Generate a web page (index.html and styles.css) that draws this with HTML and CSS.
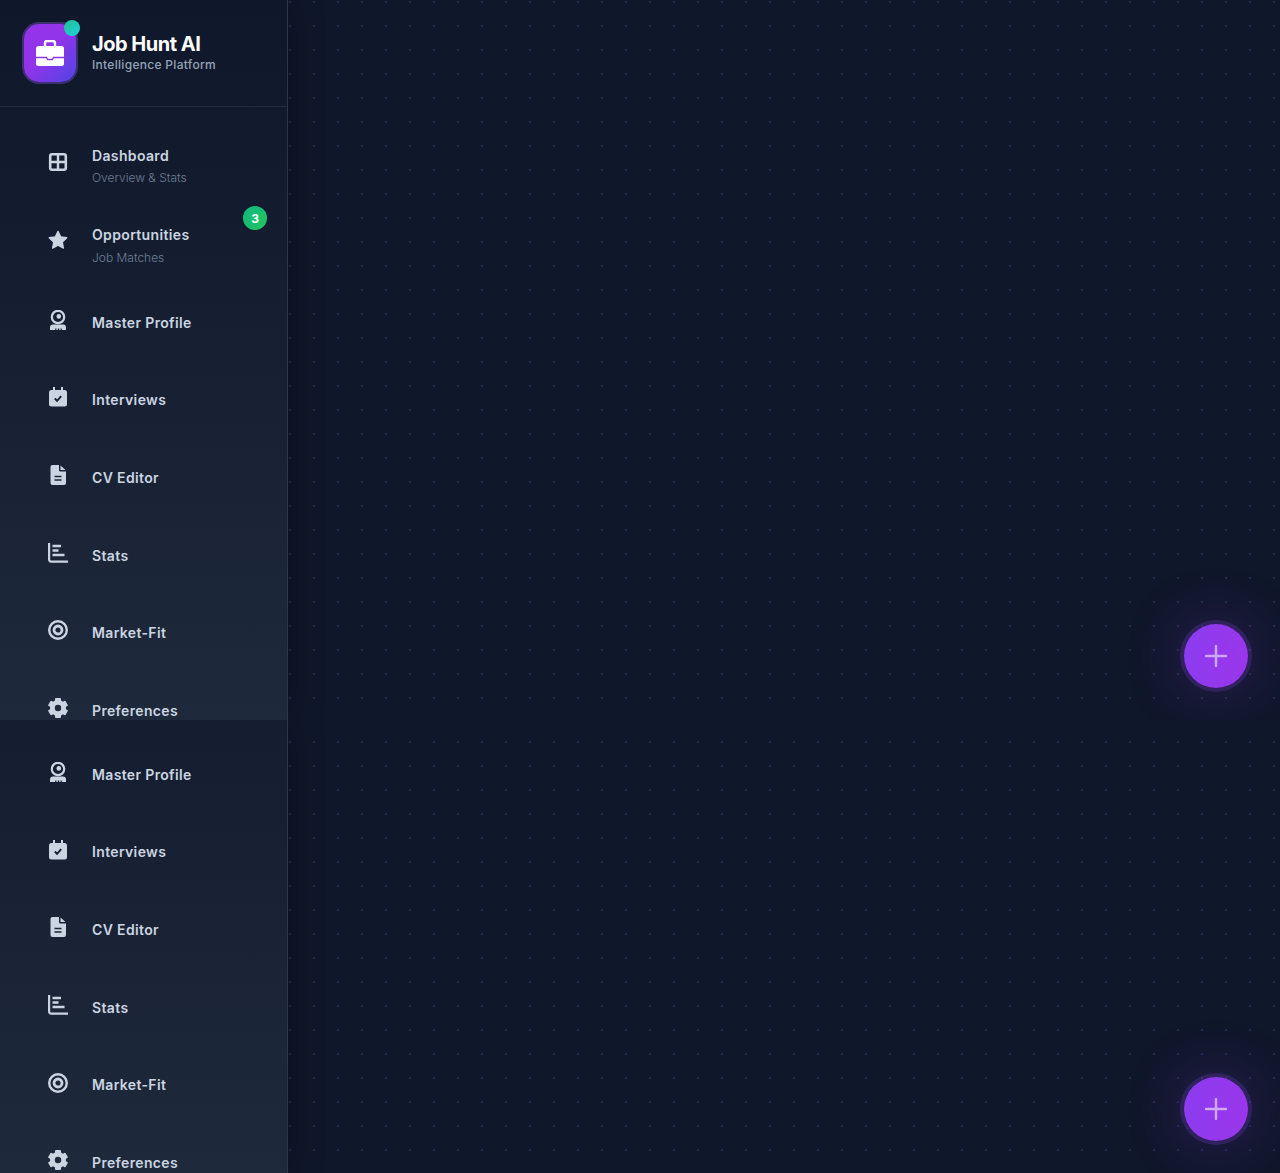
FILE: index.html
```html
<!DOCTYPE html>
<html lang="en">
<head>
  <meta charset="UTF-8">
  <meta name="viewport" content="width=device-width, initial-scale=1">
  <title>Job Hunt AI</title>
  <link rel="stylesheet" href="styles.css">
</head>
<body>
  <!-- Iconos compartidos -->
  <svg class="icon-defs" xmlns="http://www.w3.org/2000/svg">
    <symbol id="i-dashboard" viewBox="0 0 20 20">
      <rect x="2.200" y="2.200" width="15.600" height="15.600" rx="2" fill="none" stroke="currentColor" stroke-width="2.600"/>
      <path d="M10 2v16M2 10h16" fill="none" stroke="currentColor" stroke-width="2.400"/>
    </symbol>
    <symbol id="i-star" viewBox="0 0 20 20">
      <path d="M10 1.300l2.700 5.500 6.100.9-4.400 4.300 1 6.100-5.400-2.900-5.400 2.900 1-6.100-4.400-4.300 6.100-.9z" fill="currentColor" stroke="currentColor" stroke-width="1.200" stroke-linejoin="round"/>
    </symbol>
    <symbol id="i-profile" viewBox="0 0 20 20">
      <circle cx="10" cy="7" r="6.200" fill="none" stroke="currentColor" stroke-width="2.200"/>
      <circle cx="10.800" cy="6.400" r="2.300" fill="currentColor"/>
      <path d="M2 20v-2.500A3 3 0 0 1 5 14.500h10a3 3 0 0 1 3 3V20h-4.200v-1.500h-1.200V20h-1.400v-1.500H9.800V20H8.400v-1.500H7.200V20z" fill="currentColor"/>
    </symbol>
    <symbol id="i-calendar" viewBox="0 0 20 20">
      <path d="M5 0h2v3h6V0h2v3h1.500A2.500 2.500 0 0 1 19 5.500V17a2.500 2.500 0 0 1-2.500 2.500h-13A2.500 2.500 0 0 1 1 17V5.500A2.500 2.500 0 0 1 3.500 3H5z" fill="currentColor"/>
      <path d="M6.800 11.500l2.300 2.300 4.100-4.600" fill="none" stroke="#1a2438" stroke-width="2"/>
    </symbol>
    <symbol id="i-file" viewBox="0 0 20 20">
      <path d="M4.500 0H11v5a1.500 1.500 0 0 0 1.500 1.500H18V18a2 2 0 0 1-2 2H4.500a2 2 0 0 1-2-2V2a2 2 0 0 1 2-2zM12.500 .5L17.500 5h-5z" fill="currentColor"/>
      <path d="M6.500 11.500h7M6.500 15h7" fill="none" stroke="#1b2539" stroke-width="1.500"/>
    </symbol>
    <symbol id="i-chart" viewBox="0 0 20 20">
      <path d="M1.100 0v16.600a2 2 0 0 0 2 2H20" fill="none" stroke="currentColor" stroke-width="2.200"/>
      <path d="M4.500 3h8.500M4.500 7.500h6M4.500 12h12" fill="none" stroke="currentColor" stroke-width="2.400"/>
    </symbol>
    <symbol id="i-target" viewBox="0 0 20 20">
      <circle cx="10" cy="10" r="8.800" fill="none" stroke="currentColor" stroke-width="2.400"/>
      <circle cx="10" cy="10" r="4" fill="none" stroke="currentColor" stroke-width="2.800"/>
    </symbol>
    <symbol id="i-gear" viewBox="0 0 20 20">
      <circle cx="10" cy="10" r="5.600" fill="none" stroke="currentColor" stroke-width="4.800"/>
      <g fill="currentColor">
        <rect x="7" y="0" width="6" height="5" rx="1"/>
        <rect x="7" y="0" width="6" height="5" rx="1" transform="rotate(60 10 10)"/>
        <rect x="7" y="0" width="6" height="5" rx="1" transform="rotate(120 10 10)"/>
        <rect x="7" y="0" width="6" height="5" rx="1" transform="rotate(180 10 10)"/>
        <rect x="7" y="0" width="6" height="5" rx="1" transform="rotate(240 10 10)"/>
        <rect x="7" y="0" width="6" height="5" rx="1" transform="rotate(300 10 10)"/>
      </g>
    </symbol>
    <symbol id="i-plus" viewBox="0 0 22 22">
      <path d="M11 1v20M1 11h20" fill="none" stroke="currentColor" stroke-width="2.400" stroke-linecap="round"/>
    </symbol>
  </svg>

  <!-- Primera vista -->
  <section class="frame frame-top">
    <aside class="sidebar">
      <header class="brand">
        <div class="brand-logo">
          <svg width="28" height="26" viewBox="0 0 28 26">
            <path d="M9 7V3a2 2 0 0 1 2-2h6a2 2 0 0 1 2 2v4" fill="none" stroke="#fff" stroke-width="2.400"/>
            <rect y="6" width="28" height="20" rx="2.500" fill="#fff"/>
            <path d="M0 17.500H10.500L11.500 19.500H16.500L17.500 17.500H28" fill="none" stroke="#8a35e6" stroke-width="1.300"/>
          </svg>
          <span class="brand-dot"></span>
        </div>
        <div class="brand-text">
          <h1 class="brand-title">Job Hunt AI</h1>
          <p class="brand-sub">Intelligence Platform</p>
        </div>
      </header>
      <nav class="nav">
        <a class="nav-item nav-item-double">
          <svg class="nav-icon"><use href="#i-dashboard"/></svg>
          <span class="nav-text"><span class="nav-title">Dashboard</span><span class="nav-sub">Overview &amp; Stats</span></span>
        </a>
        <a class="nav-item nav-item-double nav-item-badged">
          <svg class="nav-icon"><use href="#i-star"/></svg>
          <span class="nav-text"><span class="nav-title">Opportunities</span><span class="nav-sub">Job Matches</span></span>
          <span class="nav-badge">3</span>
        </a>
        <a class="nav-item"><svg class="nav-icon"><use href="#i-profile"/></svg><span class="nav-title">Master Profile</span></a>
        <a class="nav-item"><svg class="nav-icon"><use href="#i-calendar"/></svg><span class="nav-title">Interviews</span></a>
        <a class="nav-item"><svg class="nav-icon"><use href="#i-file"/></svg><span class="nav-title">CV Editor</span></a>
        <a class="nav-item"><svg class="nav-icon"><use href="#i-chart"/></svg><span class="nav-title">Stats</span></a>
        <a class="nav-item"><svg class="nav-icon"><use href="#i-target"/></svg><span class="nav-title">Market-Fit</span></a>
        <a class="nav-item"><svg class="nav-icon"><use href="#i-gear"/></svg><span class="nav-title">Preferences</span></a>
      </nav>
    </aside>
    <main class="content">
      <button class="fab"><svg class="fab-icon"><use href="#i-plus"/></svg></button>
    </main>
  </section>

  <!-- Segunda vista, misma pantalla desplazada -->
  <section class="frame frame-tail">
    <aside class="sidebar">
      <nav class="nav">
        <a class="nav-item"><svg class="nav-icon"><use href="#i-profile"/></svg><span class="nav-title">Master Profile</span></a>
        <a class="nav-item"><svg class="nav-icon"><use href="#i-calendar"/></svg><span class="nav-title">Interviews</span></a>
        <a class="nav-item"><svg class="nav-icon"><use href="#i-file"/></svg><span class="nav-title">CV Editor</span></a>
        <a class="nav-item"><svg class="nav-icon"><use href="#i-chart"/></svg><span class="nav-title">Stats</span></a>
        <a class="nav-item"><svg class="nav-icon"><use href="#i-target"/></svg><span class="nav-title">Market-Fit</span></a>
        <a class="nav-item"><svg class="nav-icon"><use href="#i-gear"/></svg><span class="nav-title">Preferences</span></a>
      </nav>
    </aside>
    <main class="content">
      <button class="fab"><svg class="fab-icon"><use href="#i-plus"/></svg></button>
    </main>
  </section>
</body>
</html>
```

FILE: styles.css
```css
/* Variables para mantener consistencia */
:root {
  --bg-dark: #0f172a;
  --bg-light: #1e293b;
  --line: #2a3649;
  --text-main: #cbd5e1;
  --text-soft: #94a3b8;
  --text-dim: #6d7d94;
  --row: 77.67px;
}

* {
  box-sizing: border-box;
}

html,
body {
  margin: 0;
  background: var(--bg-dark);
}

body {
  font-family: "Inter", "Liberation Sans", sans-serif;
  color: var(--text-main);
}

.icon-defs {
  display: none;
}

.frame {
  display: flex;
  overflow: hidden;
}

.frame-top {
  height: 720px;
}

.frame-tail {
  height: 453px;
}

/* Barra lateral */
.sidebar {
  position: relative;
  z-index: 1;
  flex: 0 0 288px;
  overflow: hidden;
  background: linear-gradient(180deg, var(--bg-dark), var(--bg-light)) no-repeat left bottom / 100% 720px;
  border-right: 1px solid var(--line);
  box-shadow: 4px 0 30px rgba(0, 0, 0, 0.25);
}

.brand {
  display: flex;
  align-items: center;
  gap: 16px;
  height: 107px;
  padding: 24px;
  border-bottom: 1px solid #212c3e;
}

.brand-logo {
  position: relative;
  display: flex;
  flex: 0 0 52px;
  align-items: center;
  justify-content: center;
  height: 58px;
  border-radius: 15px;
  background: linear-gradient(135deg, #9333ea 0%, #9333ea 45%, #4f46e5 100%);
  box-shadow: 0 0 0 2px rgba(147, 90, 240, 0.35);
}

.brand-dot {
  position: absolute;
  top: -4px;
  right: -4px;
  width: 16px;
  height: 16px;
  border-radius: 50%;
  background: linear-gradient(135deg, #22c08f, #1fd0e0);
}

.brand-text {
  margin-bottom: 2px;
}

.brand-title {
  margin: 0;
  font-size: 20px;
  font-weight: 700;
  line-height: 24px;
  letter-spacing: -0.5px;
  color: #fff;
}

.brand-sub {
  margin: 1px 0 0;
  font-size: 12px;
  font-weight: 500;
  line-height: 16px;
  letter-spacing: 0.3px;
  color: var(--text-soft);
}

.nav {
  display: grid;
  grid-auto-rows: var(--row);
  padding-top: 21.400px;
}

.frame-tail .nav {
  padding-top: 16px;
}

.nav-item {
  position: relative;
  display: flex;
  align-items: center;
  gap: 24px;
  padding-left: 48px;
}

.nav-icon {
  flex: 0 0 20px;
  width: 20px;
  height: 20px;
  margin-bottom: 5.400px;
  color: var(--text-main);
}

.nav-item-double {
  padding-bottom: 3px;
}

.nav-item-double .nav-icon {
  margin-bottom: 7px;
}

.nav-item-badged {
  padding-top: 2px;
  padding-bottom: 0;
}

.nav-item-badged .nav-icon {
  margin-bottom: 12px;
}

.nav-text {
  display: flex;
  flex-direction: column;
  gap: 4px;
}

.nav-item-badged .nav-text {
  gap: 5px;
}

.nav-title {
  font-size: 14px;
  font-weight: 600;
  line-height: 20px;
  letter-spacing: 0.35px;
  color: var(--text-main);
}

.nav-sub {
  font-size: 12px;
  font-weight: 300;
  line-height: 16px;
  color: var(--text-dim);
}

.nav-badge {
  position: absolute;
  top: 0;
  right: 20px;
  display: flex;
  align-items: center;
  justify-content: center;
  width: 24px;
  height: 24px;
  border-radius: 50%;
  background: linear-gradient(135deg, #10b981, #22c55e);
  font-size: 12px;
  font-weight: 700;
  color: #fff;
}

/* Zona principal con puntos */
.content {
  position: relative;
  flex: 1;
  background-color: var(--bg-dark);
  background-image: radial-gradient(circle at 2px 2px, rgba(99, 102, 241, 0.22) 1px, transparent 0);
  background-size: 24px 24px;
}

.frame-tail .content {
  background-position: 0 20px;
}

.fab {
  position: absolute;
  right: 32px;
  bottom: 32px;
  display: flex;
  align-items: center;
  justify-content: center;
  width: 64px;
  height: 64px;
  padding: 0;
  border: none;
  border-radius: 50%;
  background: linear-gradient(100deg, #8b3cf0, #9b35ea);
  box-shadow: 0 0 0 4px rgba(139, 72, 240, 0.2), 0 0 60px rgba(147, 51, 234, 0.32);
}

.fab-icon {
  width: 22px;
  height: 22px;
  color: #cda9f8;
}
```
